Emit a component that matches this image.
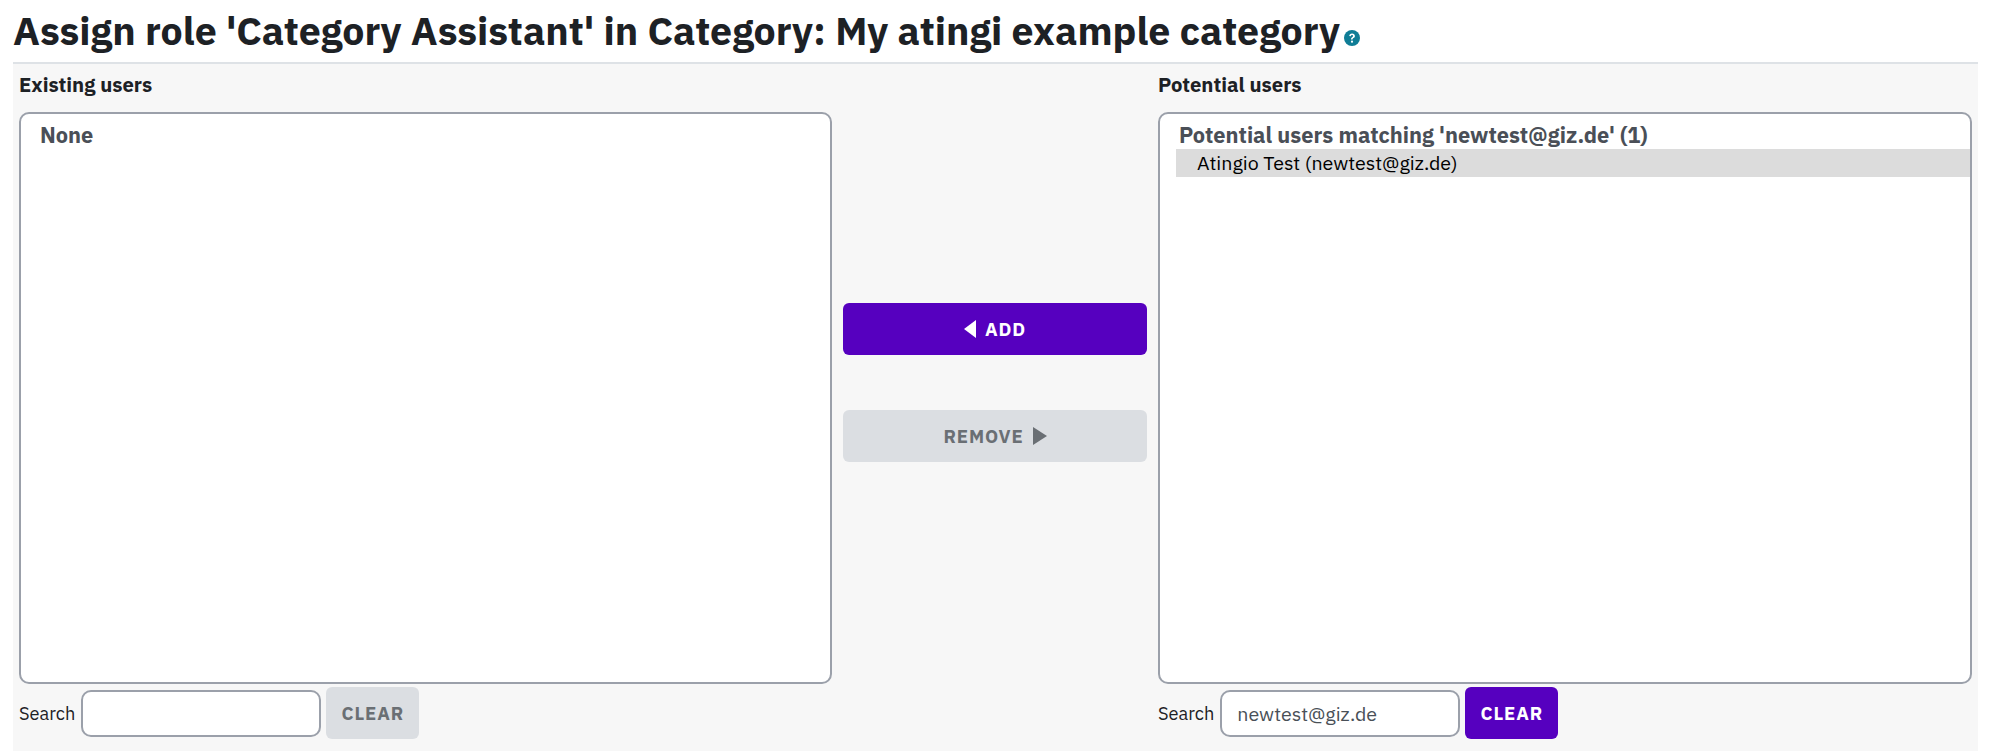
<div class="page">
  <h1>Assign role 'Category Assistant' in Category: My atingi example category<svg class="help" viewBox="0 0 16 16" width="16" height="16" aria-hidden="true"><circle cx="8" cy="8" r="8" fill="#0f7d96"/><path d="M5.2 6.1c.1-1.7 1.3-2.6 2.9-2.6 1.6 0 2.8 1 2.8 2.4 0 1-.5 1.6-1.4 2.2-.7.5-.9.7-.9 1.4H7c0-1.2.3-1.8 1.1-2.3.6-.4.9-.7.9-1.2 0-.5-.4-.9-1-.9-.7 0-1.1.4-1.2 1.1z" fill="#fff"/><circle cx="8" cy="11.7" r="1.1" fill="#fff"/></svg></h1>
  <div class="panel">
    <section class="side">
      <div class="label">Existing users</div>
      <div class="listbox"><div class="group">None</div></div>
      <div class="search">
        <span>Search</span>
        <input type="text" />
        <button class="btn small off">CLEAR</button>
      </div>
    </section>
    <div class="middle">
      <button class="btn wide on"><span class="tri left"></span>ADD</button>
      <button class="btn wide off">REMOVE<span class="tri right"></span></button>
    </div>
    <section class="side">
      <div class="label">Potential users</div>
      <div class="listbox">
        <div class="group">Potential users matching 'newtest@giz.de' (1)</div>
        <div class="option">Atingio Test (newtest@giz.de)</div>
      </div>
      <div class="search">
        <span>Search</span>
        <input type="text" value="newtest@giz.de" />
        <button class="btn small on">CLEAR</button>
      </div>
    </section>
  </div>
</div>

<style>
  :global(body) {
    background: #fff;
    font-family: "IBM Plex Sans", "Noto Sans", sans-serif;
    color: #1d2125;
  }

  .page {
    height: 751px;
    padding: 0 22px 0 13px;
    box-sizing: border-box;
    display: flex;
    flex-direction: column;
  }

  h1 {
    margin: 0;
    height: 64px;
    box-sizing: border-box;
    padding-top: 7px;
    font-size: 39.3px;
    line-height: 48px;
    font-weight: 700;
    white-space: nowrap;
    border-bottom: 2px solid #dee2e6;
  }

  .help {
    margin-left: 4px;
    vertical-align: -1px;
  }

  .panel {
    background: #f7f7f7;
    flex: 1;
    display: grid;
    grid-template-columns: 813px 1fr 814px;
    padding: 0 6px;
    box-sizing: border-box;
  }

  .side {
    display: flex;
    flex-direction: column;
  }

  .label {
    height: 48px;
    line-height: 41px;
    font-size: 20.3px;
    font-weight: 700;
  }

  .listbox {
    height: 572px;
    box-sizing: border-box;
    background: #fff;
    border: 2px solid #9ba0aa;
    border-radius: 10px;
    padding: 8px 0 0 16px;
  }

  .group {
    font-size: 21.8px;
    line-height: 27px;
    font-weight: 700;
    color: #4a4f57;
    padding-left: 3px;
  }

  .option {
    background: #dcdcdc;
    font-size: 19.6px;
    line-height: 28px;
    color: #000;
    padding-left: 21px;
  }

  .search {
    display: flex;
    align-items: center;
    gap: 5px;
    margin-top: 3px;
    font-size: 18.2px;
  }

  .search span {
    margin-right: 1px;
  }

  .search input {
    width: 240px;
    height: 47px;
    box-sizing: border-box;
    border: 2px solid #9ba0aa;
    border-radius: 10px;
    padding: 0 15px;
    font: inherit;
    font-size: 19.6px;
    color: #495057;
    background: #fff;
  }

  .btn {
    border: 0;
    border-radius: 6px;
    font-family: inherit;
    font-weight: 700;
    font-size: 18.5px;
    letter-spacing: 0.9px;
    display: flex;
    align-items: center;
    justify-content: center;
    gap: 9px;
  }

  .on {
    background: #5600bf;
    color: #fff;
  }

  .off {
    background: #dbdee2;
    color: #6a6f74;
  }

  .small {
    width: 93px;
    height: 52px;
  }

  .middle {
    display: flex;
    flex-direction: column;
    gap: 55px;
    padding: 239px 11px 0;
  }

  .wide {
    height: 52px;
    width: 100%;
  }

  .tri {
    width: 0;
    height: 0;
    border-top: 9px solid transparent;
    border-bottom: 9px solid transparent;
  }

  .tri.left {
    border-right: 12px solid currentColor;
  }

  .tri.right {
    border-left: 14px solid currentColor;
  }
</style>
